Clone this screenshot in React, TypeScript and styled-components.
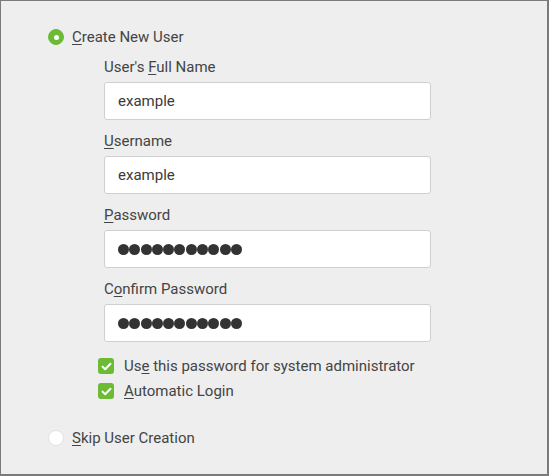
import React from "react";
import styled, { createGlobalStyle } from "styled-components";

const Global = createGlobalStyle`
  html, body { margin: 0; padding: 0; background: #eeeeee; }
  body { font-family: Roboto, "Noto Sans", sans-serif; }
`;

const Frame = styled.div`
  box-sizing: border-box;
  width: 549px;
  height: 476px;
  background: #eeeeee;
  border: 1px solid #7a7a7a;
  border-right-width: 2px;
  border-bottom-width: 2px;
  padding: 24px 0 0 47px;
  color: #444444;
  font-size: 15px;
`;

const OptionRow = styled.div<{ $mt?: number }>`
  display: flex;
  align-items: center;
  gap: 8px;
  height: 24px;
  margin-top: ${(p) => p.$mt ?? 0}px;
`;

const Radio = styled.span<{ $on?: boolean }>`
  box-sizing: border-box;
  width: 16px;
  height: 16px;
  border-radius: 50%;
  background: ${(p) => (p.$on ? "#6dbb35" : "#ffffff")};
  border: 1px solid ${(p) => (p.$on ? "#6dbb35" : "#e2e2e2")};
  display: flex;
  align-items: center;
  justify-content: center;
  &::after {
    content: "";
    width: 5px;
    height: 5px;
    border-radius: 50%;
    background: ${(p) => (p.$on ? "#ffffff" : "transparent")};
  }
`;

const Form = styled.div`
  display: flex;
  flex-direction: column;
  padding-left: 56px;
  margin-top: 9px;
`;

const Field = styled.div`
  display: flex;
  flex-direction: column;
  margin-bottom: 12px;
`;

const Label = styled.label`
  height: 18px;
  line-height: 18px;
  margin-bottom: 6px;
`;

const Input = styled.div`
  box-sizing: border-box;
  width: 327px;
  height: 38px;
  background: #ffffff;
  border: 1px solid #cfcfcf;
  border-radius: 3px;
  display: flex;
  align-items: center;
  padding-left: 13px;
  color: #3a3a3a;
`;

const Dots = styled.div`
  display: flex;
  gap: 0.3px;
`;

const Dot = styled.span`
  width: 11px;
  height: 11px;
  border-radius: 50%;
  background: #333333;
  margin-top: 1px;
`;

const Checks = styled.div`
  display: flex;
  flex-direction: column;
  gap: 7px;
  margin-left: -6px;
  margin-top: 3px;
`;

const CheckRow = styled.div`
  display: flex;
  align-items: center;
  gap: 10px;
  height: 18px;
`;

const Box = styled.span`
  width: 16px;
  height: 16px;
  border-radius: 3px;
  background: #6dbb35;
  display: flex;
  align-items: center;
  justify-content: center;
`;

const U = styled.span`
  text-decoration: underline;
  text-underline-offset: 2px;
`;

const Password = () => (
  <Dots>
    {Array.from({ length: 11 }).map((_, i) => (
      <Dot key={i} />
    ))}
  </Dots>
);

const Tick = () => (
  <svg width="11" height="9" viewBox="0 0 11 9">
    <path d="M1.5 4.6 L4.2 7.2 L9.5 1.8" fill="none" stroke="#fff" strokeWidth="2" strokeLinecap="round" strokeLinejoin="round" />
  </svg>
);

export default function App() {
  return (
    <>
      <Global />
      <Frame>
        <OptionRow>
          <Radio $on />
          <span>
            <U>C</U>reate New User
          </span>
        </OptionRow>
        <Form>
          <Field>
            <Label>
              User's <U>F</U>ull Name
            </Label>
            <Input>example</Input>
          </Field>
          <Field>
            <Label>
              <U>U</U>sername
            </Label>
            <Input>example</Input>
          </Field>
          <Field>
            <Label>
              <U>P</U>assword
            </Label>
            <Input>
              <Password />
            </Input>
          </Field>
          <Field>
            <Label>
              C<U>o</U>nfirm Password
            </Label>
            <Input>
              <Password />
            </Input>
          </Field>
          <Checks>
            <CheckRow>
              <Box>
                <Tick />
              </Box>
              <span>
                Us<U>e</U> this password for system administrator
              </span>
            </CheckRow>
            <CheckRow>
              <Box>
                <Tick />
              </Box>
              <span>
                <U>A</U>utomatic Login
              </span>
            </CheckRow>
          </Checks>
        </Form>
        <OptionRow $mt={26}>
          <Radio />
          <span>
            <U>S</U>kip User Creation
          </span>
        </OptionRow>
      </Frame>
    </>
  );
}
